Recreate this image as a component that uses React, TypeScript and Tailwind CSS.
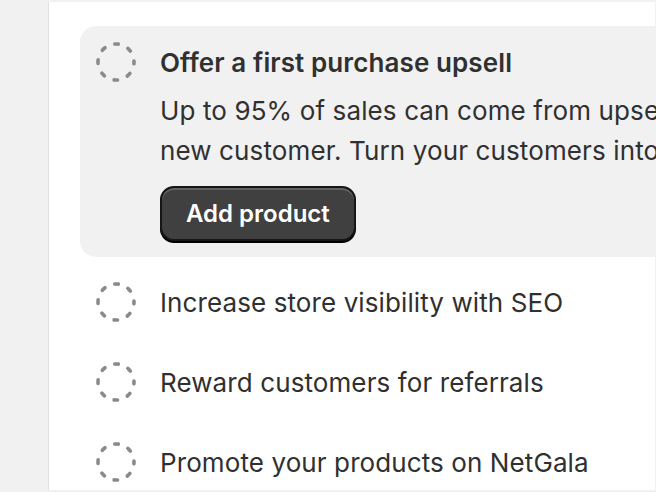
import React from "react";

const tasks = [
  "Increase store visibility with SEO",
  "Reward customers for referrals",
  "Promote your products on NetGala",
];

function DashedCircle() {
  return (
    <svg width="40" height="40" viewBox="0 0 40 40" className="shrink-0">
      <circle
        cx="20"
        cy="20"
        r="18"
        fill="none"
        stroke="#8a8a8a"
        strokeWidth="3.6"
        strokeLinecap="round"
        strokeDasharray="3.6 10.54"
        strokeDashoffset="1.8"
      />
    </svg>
  );
}

export default function App() {
  return (
    <div
      className="w-[656px] h-[492px] overflow-hidden bg-[#f1f1f1] pl-[48px] pt-[2px] text-[#303030]"
      style={{ fontFamily: "Inter, 'Noto Sans', sans-serif" }}
    >
      <div className="w-[607px] h-[488px] bg-white border-l border-[#e0e0e0] pl-[31px] pt-[24px]">
        {/* expanded task */}
        <div className="w-[720px] bg-[#f1f1f1] rounded-[16px] p-[16px] flex gap-[24px]">
          <DashedCircle />
          <div className="flex flex-col pt-[1px]">
            <div className="text-[26px] leading-[40px] font-semibold tracking-[0.1px] whitespace-nowrap">
              Offer a first purchase upsell
            </div>
            <p className="mt-[8px] text-[26px] leading-[40px] tracking-[0.12px] whitespace-nowrap">
              Up to 95% of sales can come from upselling to a
              <br />
              new customer. Turn your customers into fans
            </p>
            <div className="mt-[15px]">
              <button className="h-[55px] px-[24px] rounded-[14px] bg-[#404040] border-2 border-[#161616] text-white text-[24px] font-semibold shadow-[inset_0_2px_0_rgba(255,255,255,0.18),0_2px_0_#000]">
                Add product
              </button>
            </div>
          </div>
        </div>

        {/* collapsed tasks */}
        <div className="mt-[5px] flex flex-col">
          {tasks.map((t) => (
            <div key={t} className="h-[80px] pl-[16px] flex items-center gap-[24px]">
              <DashedCircle />
              <span className="text-[26px] leading-[40px] pt-[2px] tracking-[0.1px] whitespace-nowrap">{t}</span>
            </div>
          ))}
        </div>
      </div>
    </div>
  );
}
